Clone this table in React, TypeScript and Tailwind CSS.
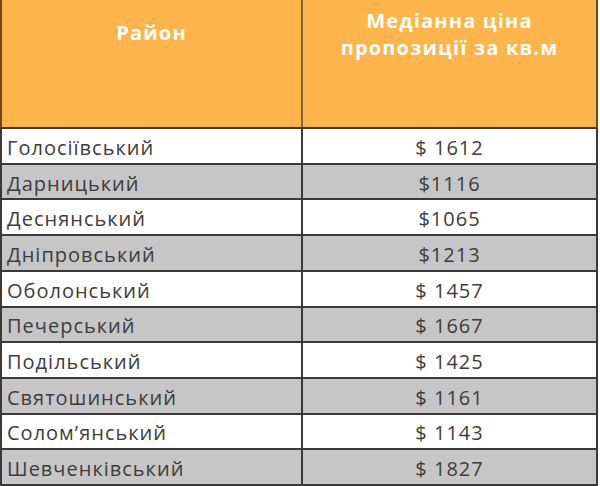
const rows: [string, string][] = [
  ["Голосіївський", "$ 1612"],
  ["Дарницький", "$1116"],
  ["Деснянський", "$1065"],
  ["Дніпровський", "$1213"],
  ["Оболонський", "$ 1457"],
  ["Печерський", "$ 1667"],
  ["Подільський", "$ 1425"],
  ["Святошинський", "$ 1161"],
  ["Солом’янський", "$ 1143"],
  ["Шевченківський", "$ 1827"],
];

export default function App() {
  return (
    <div
      className="w-[600px] h-[486px] overflow-hidden bg-white flex flex-col"
      style={{ fontFamily: '"Open Sans", "Noto Sans", sans-serif' }}
    >
      <div className="h-[129px] shrink-0 grid grid-cols-[301px_1fr] w-[598px] bg-[#fdb54b] border-l-2 border-r-2 border-b-2 border-l-[#6b4a20] border-r-[#6b4a20] border-b-[#3a3a3a]">
        <div className="border-r-2 border-[#8a6530] flex justify-center pt-[18px] text-white font-bold text-[20px] tracking-[1.2px]">
          Район
        </div>
        <div className="flex flex-col items-center pt-[7px] text-white font-bold text-[20px] leading-[27px] tracking-[1.2px]">
          <span>Медіанна ціна</span>
          <span>пропозиції за кв.м</span>
        </div>
      </div>
      <div className="flex-1 min-h-0 flex flex-col w-[598px]">
        {rows.map(([name, price], i) => (
          <div
            key={name}
            className={`flex-1 min-h-0 grid grid-cols-[301px_1fr] border-l-2 border-r-2 border-b-2 border-[#3a3a3a] text-[#3d3d3d] text-[20px] leading-[24px] tracking-[1px] ${
              i % 2 === 1 ? "bg-[#c6c6c6]" : "bg-white"
            }`}
          >
            <div className="border-r-2 border-[#3a3a3a] flex items-center pl-[5px] pt-[4px]">{name}</div>
            <div className="flex items-center justify-center pt-[4px]">{price}</div>
          </div>
        ))}
      </div>
    </div>
  );
}
